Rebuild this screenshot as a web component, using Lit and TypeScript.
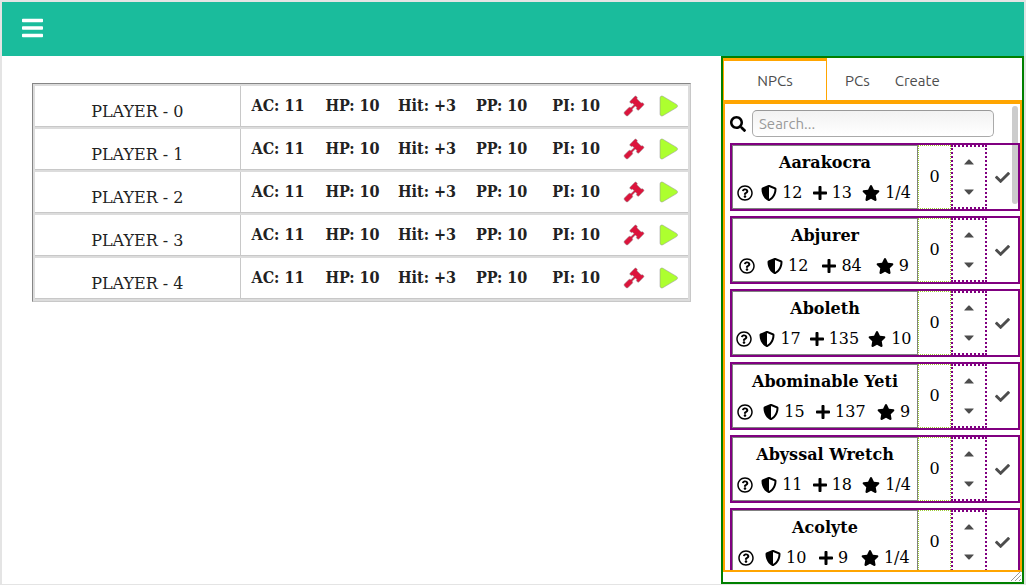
import { LitElement, html, svg, css } from "lit";
import { customElement, property, state } from "lit/decorators.js";

interface Glyph {
  width: number;
  path: string;
}

const glyphs: Record<string, Glyph> = {
  bars: {
    width: 448,
    path: "M16 132h416c8.837 0 16-7.163 16-16V76c0-8.837-7.163-16-16-16H16C7.163 60 0 67.163 0 76v40c0 8.837 7.163 16 16 16zm0 160h416c8.837 0 16-7.163 16-16v-40c0-8.837-7.163-16-16-16H16c-8.837 0-16 7.163-16 16v40c0 8.837 7.163 16 16 16zm0 160h416c8.837 0 16-7.163 16-16v-40c0-8.837-7.163-16-16-16H16c-8.837 0-16 7.163-16 16v40c0 8.837 7.163 16 16 16z",
  },
  search: {
    width: 512,
    path: "M505 442.7L405.3 343c-4.500-4.500-10.600-7-17-7H372c27.600-35.300 44-79.700 44-128C416 93.100 322.900 0 208 0S0 93.100 0 208s93.100 208 208 208c48.300 0 92.700-16.400 128-44v16.300c0 6.400 2.500 12.500 7 17l99.700 99.700c9.400 9.400 24.600 9.400 33.900 0l28.300-28.300c9.400-9.400 9.400-24.600.1-34zM208 336c-70.700 0-128-57.200-128-128 0-70.700 57.200-128 128-128 70.700 0 128 57.200 128 128 0 70.700-57.200 128-128 128z",
  },
  question: {
    width: 512,
    path: "M256 8C119.043 8 8 119.083 8 256c0 136.997 111.043 248 248 248s248-111.003 248-248C504 119.083 392.957 8 256 8zm0 448c-110.532 0-200-89.431-200-200 0-110.495 89.472-200 200-200 110.491 0 200 89.471 200 200 0 110.530-89.431 200-200 200zm107.244-255.200c0 67.052-72.421 68.084-72.421 92.863V300c0 6.627-5.373 12-12 12h-45.647c-6.627 0-12-5.373-12-12v-8.659c0-35.745 27.100-50.034 47.579-61.516 17.561-9.845 28.324-16.541 28.324-29.579 0-17.246-21.999-28.693-39.784-28.693-23.189 0-33.894 10.977-48.942 29.969-4.057 5.120-11.460 6.071-16.666 2.124l-27.824-21.098c-5.107-3.872-6.251-11.066-2.644-16.363C184.846 131.491 214.940 112 261.794 112c49.071 0 101.450 38.304 101.450 88.800zM298 368c0 23.159-18.841 42-42 42s-42-18.841-42-42 18.841-42 42-42 42 18.841 42 42z",
  },
  shield: {
    width: 512,
    path: "M466.500 83.700l-192-80a48.150 48.150 0 0 0-36.900 0l-192 80C27.700 91.100 16 108.600 16 128c0 198.500 114.500 335.700 221.500 380.300 11.800 4.900 25.100 4.900 36.900 0C360.100 472.600 496 349.300 496 128c0-19.400-11.700-36.900-29.500-44.300zM256.100 446.300l-.1-381 175.900 73.300c-3.300 151.400-82.100 261.100-175.800 307.700z",
  },
  plus: {
    width: 448,
    path: "M416 208H272V64c0-17.670-14.330-32-32-32h-32c-17.670 0-32 14.330-32 32v144H32c-17.670 0-32 14.330-32 32v32c0 17.670 14.330 32 32 32h144v144c0 17.670 14.330 32 32 32h32c17.670 0 32-14.330 32-32V304h144c17.670 0 32-14.330 32-32v-32c0-17.670-14.330-32-32-32z",
  },
  star: {
    width: 576,
    path: "M259.300 17.800L194 150.200 47.900 171.500c-26.200 3.800-36.700 36.100-17.700 54.600l105.700 103-25 145.500c-4.500 26.300 23.200 46 46.400 33.700L288 439.600l130.700 68.700c23.200 12.200 50.900-7.400 46.400-33.700l-25-145.500 105.700-103c19-18.500 8.500-50.800-17.700-54.600L382 150.200 316.700 17.800c-11.700-23.600-45.600-23.900-57.400 0z",
  },
  check: {
    width: 512,
    path: "M173.898 439.404l-166.400-166.400c-9.997-9.997-9.997-26.206 0-36.204l36.203-36.204c9.997-9.998 26.207-9.998 36.204 0L192 312.690 432.095 72.596c9.997-9.997 26.207-9.997 36.204 0l36.203 36.204c9.997 9.997 9.997 26.206 0 36.204l-294.400 294.401c-9.998 9.997-26.207 9.997-36.204-.001z",
  },
  gavel: {
    width: 512,
    path: "M504.971 199.362l-22.627-22.627c-9.373-9.373-24.569-9.373-33.941 0l-5.657 5.657L329.608 69.255l5.657-5.657c9.373-9.373 9.373-24.569 0-33.941L312.638 7.029c-9.373-9.373-24.569-9.373-33.941 0L154.246 131.480c-9.373 9.373-9.373 24.569 0 33.941l22.627 22.627c9.373 9.373 24.569 9.373 33.941 0l5.657-5.657 39.598 39.598-81.040 81.040-5.657-5.657c-12.497-12.497-32.758-12.497-45.255 0L9.373 412.118c-12.497 12.497-12.497 32.758 0 45.255l45.255 45.255c12.497 12.497 32.758 12.497 45.255 0l114.745-114.745c12.497-12.497 12.497-32.758 0-45.255l-5.657-5.657 81.040-81.040 39.598 39.598-5.657 5.657c-9.373 9.373-9.373 24.569 0 33.941l22.627 22.627c9.373 9.373 24.569 9.373 33.941 0l124.451-124.451c9.372-9.372 9.372-24.568 0-33.941z",
  },
  play: {
    width: 448,
    path: "M424.400 214.700L72.400 6.600C43.800-10.300 0 6.100 0 47.900V464c0 37.500 40.700 60.100 72.400 41.300l352-208c31.400-18.500 31.500-64.100 0-82.600z",
  },
  up: { width: 512, path: "M256 176c10 0 16 4 23 11L404 318c7 8 5 18-8 18H116c-13 0-15-10-8-18L233 187c7-7 13-11 23-11z" },
  down: { width: 512, path: "M256 336c10 0 16-4 23-11L404 194c7-8 5-18-8-18H116c-13 0-15 10-8 18L233 325c7 7 13 11 23 11z" },
};

const icon = (name: string) => {
  const glyph = glyphs[name];
  return svg`<svg class="icon icon-${name}" viewBox="0 0 ${glyph.width} 512" aria-hidden="true"><path d=${glyph.path}></path></svg>`;
};

const shared = css`
  *, *::before, *::after { box-sizing: border-box; }
  button {
    margin: 0;
    padding: 0;
    border: 0;
    background: none;
    color: inherit;
    font: inherit;
    cursor: pointer;
  }
  .icon {
    display: block;
    flex: none;
    height: 16px;
    fill: currentColor;
    overflow: visible;
  }
`;

@customElement("player-table")
export class PlayerTable extends LitElement {
  static styles = [
    shared,
    css`
      :host { display: block; }
      .players {
        width: 100%;
        table-layout: fixed;
        border-collapse: separate;
        border-spacing: 0 2px;
        padding: 0 2px;
        border: 1px solid;
        border-color: #868686 #c8c8c8 #c8c8c8 #868686;
        background: #dcdcdc;
        color: #222;
        font: 16px/20px "DejaVu Serif", serif;
      }
      th, td {
        height: 41px;
        padding: 0;
        border-bottom: 1px solid #c8c8c8;
        background: #fff;
        text-align: center;
        white-space: nowrap;
      }
      th {
        width: 31.5%;
        padding-top: 12px;
        border-right: 1px solid #c8c8c8;
        font-weight: 400;
      }
      td { font-family: "DejaVu Serif Condensed", "DejaVu Serif", serif; font-weight: 700; }
      .actions {
        display: flex;
        justify-content: center;
        gap: 16px;
      }
      .actions .icon { height: 20px; stroke: #999; stroke-width: 14px; }
      .attack { color: crimson; }
      .turn { color: greenyellow; }
    `,
  ];

  private players = Array.from({ length: 5 }, (_, i) => `PLAYER - ${i}`);
  private stats = ["AC: 11", "HP: 10", "Hit: +3", "PP: 10", "PI: 10"];

  render() {
    return html`
      <table class="players" aria-label="Players">
        <tbody>
          ${this.players.map(
            (name) => html`<tr>
              <th scope="row">${name}</th>
              ${this.stats.map((stat) => html`<td>${stat}</td>`)}
              <td>
                <div class="actions">
                  <button class="attack" aria-label="Attack">${icon("gavel")}</button>
                  <button class="turn" aria-label="Start turn">${icon("play")}</button>
                </div>
              </td>
            </tr>`
          )}
        </tbody>
      </table>
    `;
  }
}

@customElement("npc-card")
export class NpcCard extends LitElement {
  static styles = [
    shared,
    css`
      :host {
        display: flex;
        height: 68px;
        border: 2px solid purple;
        color: #000;
        font: 16px/20px "DejaVu Serif", serif;
      }
      .info {
        flex: 1;
        display: flex;
        flex-direction: column;
        gap: 10px;
        padding-top: 7px;
        border: 1px solid gray;
      }
      .name {
        margin: 0;
        font-size: 16px;
        font-weight: 700;
        text-align: center;
      }
      .stats { display: flex; justify-content: space-around; padding-right: 1px; }
      .stat { display: flex; align-items: center; gap: 5px; }
      .help {
        display: flex;
        align-items: center;
        justify-content: center;
        width: 13px;
      }
      .count {
        display: grid;
        place-items: center;
        width: 33px;
        border: 1px dotted yellowgreen;
      }
      .spinner {
        display: grid;
        grid-template-rows: 1fr 1fr;
        width: 36px;
        border: 2px dotted purple;
        color: #4d4d4d;
      }
      .spinner button, .add { display: grid; place-items: center; }
      .add { width: 31px; color: #4d4d4d; }
      .add .icon { height: 15px; }
    `,
  ];

  @property() name = "";
  @property() ac = "";
  @property() hp = "";
  @property() cr = "";
  @state() private count = 0;

  render() {
    return html`
      <div class="info">
        <h2 class="name">${this.name}</h2>
        <div class="stats">
          <button class="help" aria-label="About ${this.name}">${icon("question")}</button>
          <span class="stat">${icon("shield")}<span>${this.ac}</span></span>
          <span class="stat">${icon("plus")}<span>${this.hp}</span></span>
          <span class="stat">${icon("star")}<span>${this.cr}</span></span>
        </div>
      </div>
      <output class="count">${this.count}</output>
      <div class="spinner">
        <button aria-label="More" @click=${() => (this.count += 1)}>${icon("up")}</button>
        <button aria-label="Fewer" @click=${() => (this.count = Math.max(0, this.count - 1))}>${icon("down")}</button>
      </div>
      <button class="add" aria-label="Add ${this.name}">${icon("check")}</button>
    `;
  }
}

@customElement("npc-panel")
export class NpcPanel extends LitElement {
  static styles = [
    shared,
    css`
      :host {
        position: relative;
        display: flex;
        flex-direction: column;
        min-height: 0;
        padding-bottom: 10px;
        border: 2px solid green;
        overflow: hidden;
        color: #4d4d4d;
        font: 15px/20px Ubuntu, "Noto Sans", sans-serif;
      }
      .tabs {
        flex: none;
        display: flex;
        align-items: stretch;
        gap: 25px;
        height: 42px;
      }
      .tab { padding-top: 3px; }
      .tab.active {
        width: 104px;
        margin-right: -7px;
        padding-top: 0;
        border: 1px solid orange;
        border-top-width: 3px;
        border-bottom: 0;
      }
      .content {
        position: relative;
        flex: 1;
        display: flex;
        min-height: 0;
        border: 2px solid orange;
        border-top-width: 4px;
      }
      .thumb {
        position: absolute;
        top: 2px;
        right: 2px;
        width: 6px;
        height: 98px;
        border-radius: 3px;
        background: #ccc;
      }
      .scroller {
        position: relative;
        flex: 1;
        padding: 6px 0 0 5px;
        overflow-y: auto;
        scrollbar-width: none;
      }
      .search {
        display: flex;
        align-items: center;
        gap: 6px;
        padding-right: 26px;
        margin-bottom: 6px;
        color: #000;
      }
      input {
        flex: 1;
        min-width: 0;
        height: 27px;
        padding: 0 6px;
        border: 1px solid #aaa;
        border-top-color: #999;
        border-radius: 5px;
        background: linear-gradient(#f2f2f2, #fff);
        color: #333;
        font: inherit;
        outline: 0;
      }
      input::placeholder { color: #999; opacity: 1; }
      .list { display: flex; flex-direction: column; gap: 5px; }
      npc-card { flex: none; }
      .grip {
        position: absolute;
        right: 0;
        bottom: 0;
        width: 12px;
        height: 12px;
        stroke: #999;
        stroke-width: 1px;
        cursor: nwse-resize;
      }
    `,
  ];

  private npcs = [
    ["Aarakocra", "12", "13", "1/4"],
    ["Abjurer", "12", "84", "9"],
    ["Aboleth", "17", "135", "10"],
    ["Abominable Yeti", "15", "137", "9"],
    ["Abyssal Wretch", "11", "18", "1/4"],
    ["Acolyte", "10", "9", "1/4"],
  ];

  render() {
    return html`
      <div class="tabs" role="tablist">
        <button class="tab active" role="tab" aria-selected="true">NPCs</button>
        <button class="tab" role="tab" aria-selected="false">PCs</button>
        <button class="tab" role="tab" aria-selected="false">Create</button>
      </div>
      <div class="content">
        <div class="thumb"></div>
        <div class="scroller">
          <div class="search">
            <label for="query" aria-label="Search">${icon("search")}</label>
            <input id="query" type="text" placeholder="Search..." />
          </div>
          <div class="list">
            ${this.npcs.map(
              ([name, ac, hp, cr]) => html`<npc-card .name=${name} .ac=${ac} .hp=${hp} .cr=${cr}></npc-card>`
            )}
          </div>
        </div>
      </div>
      <svg class="grip" viewBox="0 0 12 12" aria-hidden="true"><path d="M1 11L11 1M5 11L11 5M9 11L11 9"></path></svg>
    `;
  }
}

@customElement("app-root")
export class AppRoot extends LitElement {
  static styles = [
    shared,
    css`
      :host {
        box-sizing: border-box;
        display: flex;
        flex-direction: column;
        height: 100vh;
        border: 2px solid #e4e4e4;
        border-bottom-width: 1px;
        background: #fff;
      }
      .bar {
        flex: none;
        display: flex;
        align-items: center;
        height: 54px;
        padding: 0 20px 2px;
        background: #1abc9c;
        color: #fff;
      }
      .bar .icon { height: 24px; }
      .layout { flex: 1; display: flex; min-height: 0; }
      main { flex: 1; min-width: 0; padding: 27px 30px; }
      npc-panel { flex: none; width: 303px; box-sizing: border-box; }
    `,
  ];

  render() {
    return html`
      <header class="bar">
        <button aria-label="Menu">${icon("bars")}</button>
      </header>
      <div class="layout">
        <main><player-table></player-table></main>
        <npc-panel></npc-panel>
      </div>
    `;
  }
}
